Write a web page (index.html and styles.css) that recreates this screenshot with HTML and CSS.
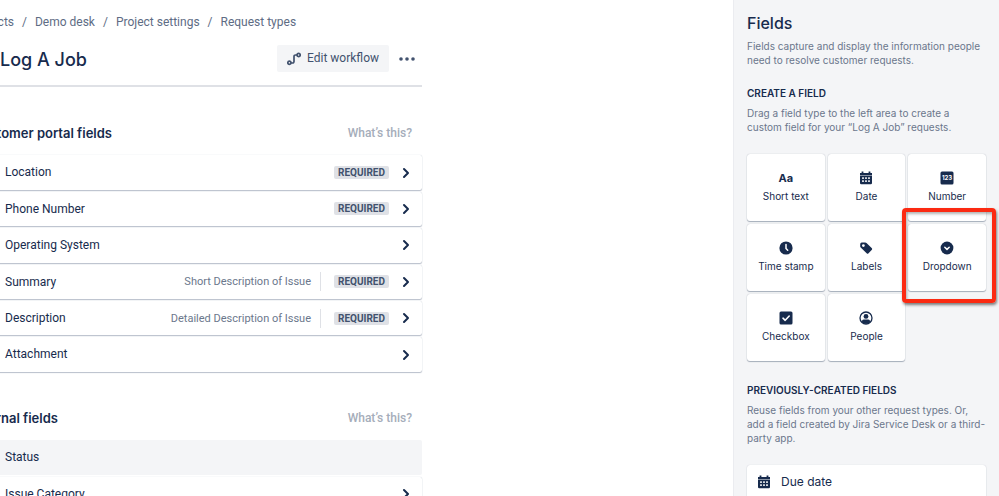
FILE: index.html
```
<!DOCTYPE html>
<html lang="en">
<head>
    <meta charset="UTF-8">
    <meta name="viewport" content="width=device-width, initial-scale=1.0">
    <title>Log A Job - Request types</title>
    <link rel="stylesheet" href="styles.css">
</head>
<body>
    <!-- Shared icons -->
    <svg class="sprite" aria-hidden="true">
        <symbol id="chevron" viewBox="0 0 10 12">
            <path d="M3 2l4 4-4 4" fill="none" stroke="currentColor" stroke-width="2" stroke-linecap="round" stroke-linejoin="round"/>
        </symbol>
        <symbol id="calendar" viewBox="0 0 14 14">
            <path d="M1 2h1.6V.6h1.8V2h5.2V.6h1.8V2H13v2H1z" fill="currentColor"/>
            <path d="M1 4.6h12V12a1.2 1.2 0 0 1-1.2 1.2H2.2A1.2 1.2 0 0 1 1 12z" fill="currentColor"/>
            <path d="M3.2 6.3h1.6v1.6H3.2zM6.2 6.3h1.6v1.6H6.2zM9.2 6.3h1.6v1.6H9.2zM3.2 9.3h1.6v1.6H3.2zM6.2 9.3h1.6v1.6H6.2zM9.2 9.3h1.6v1.6H9.2z" fill="#fff"/>
        </symbol>
    </svg>

    <div class="page">
        <main class="content">
            <nav class="breadcrumbs" aria-label="Breadcrumbs">
                <a href="#">Projects</a><span>/</span>
                <a href="#">Demo desk</a><span>/</span>
                <a href="#">Project settings</a><span>/</span>
                <a href="#">Request types</a>
            </nav>

            <header class="title-bar">
                <h1>Log A Job</h1>
                <button class="edit-button" type="button">
                    <svg width="14" height="14" viewBox="0 0 14 14" fill="none" stroke="currentColor" stroke-width="1.7">
                        <circle cx="2.4" cy="10.8" r="1.6"/>
                        <circle cx="11.6" cy="3" r="1.6"/>
                        <path d="M4 11h1.6A1.4 1.4 0 0 0 7 9.6V4.4A1.4 1.4 0 0 1 8.4 3H10"/>
                    </svg>
                    Edit workflow
                </button>
                <button class="more-button" type="button" aria-label="More actions">
                    <svg width="16" height="4" viewBox="0 0 16 4" fill="currentColor">
                        <circle cx="2" cy="2" r="1.8"/><circle cx="8" cy="2" r="1.8"/><circle cx="14" cy="2" r="1.8"/>
                    </svg>
                </button>
            </header>

            <section class="group">
                <div class="group-header">
                    <h2>Customer portal fields</h2>
                    <a href="#">What’s this?</a>
                </div>
                <ul class="rows">
                    <li class="row">
                        <span class="row-name">Location</span>
                        <span class="lozenge">REQUIRED</span>
                        <svg class="chevron"><use href="#chevron"/></svg>
                    </li>
                    <li class="row">
                        <span class="row-name">Phone Number</span>
                        <span class="lozenge">REQUIRED</span>
                        <svg class="chevron"><use href="#chevron"/></svg>
                    </li>
                    <li class="row">
                        <span class="row-name">Operating System</span>
                        <svg class="chevron"><use href="#chevron"/></svg>
                    </li>
                    <li class="row">
                        <span class="row-name">Summary</span>
                        <span class="row-note">Short Description of Issue</span>
                        <span class="lozenge">REQUIRED</span>
                        <svg class="chevron"><use href="#chevron"/></svg>
                    </li>
                    <li class="row">
                        <span class="row-name">Description</span>
                        <span class="row-note">Detailed Description of Issue</span>
                        <span class="lozenge">REQUIRED</span>
                        <svg class="chevron"><use href="#chevron"/></svg>
                    </li>
                    <li class="row">
                        <span class="row-name">Attachment</span>
                        <svg class="chevron"><use href="#chevron"/></svg>
                    </li>
                </ul>
            </section>

            <section class="group">
                <div class="group-header">
                    <h2>Internal fields</h2>
                    <a href="#">What’s this?</a>
                </div>
                <ul class="rows">
                    <li class="row row-locked">
                        <span class="row-name">Status</span>
                    </li>
                    <li class="row">
                        <span class="row-name">Issue Category</span>
                        <svg class="chevron"><use href="#chevron"/></svg>
                    </li>
                </ul>
            </section>
        </main>

        <aside class="sidebar">
            <h2>Fields</h2>
            <p>Fields capture and display the information people need to resolve customer requests.</p>

            <h3>CREATE A FIELD</h3>
            <p>Drag a field type to the left area to create a custom field for your “Log A Job” requests.</p>

            <div class="tiles">
                <button class="tile" type="button">
                    <span class="tile-letters" aria-hidden="true">Aa</span>
                    Short text
                </button>
                <button class="tile" type="button">
                    <svg class="icon"><use href="#calendar"/></svg>
                    Date
                </button>
                <button class="tile" type="button">
                    <svg class="icon" viewBox="0 0 14 14">
                        <rect x="0.5" y="0.5" width="13" height="13" rx="1.5" fill="currentColor"/>
                        <text class="icon-digits" x="7" y="9.2" text-anchor="middle">123</text>
                    </svg>
                    Number
                </button>
                <button class="tile" type="button">
                    <svg class="icon" viewBox="0 0 14 14">
                        <circle cx="7" cy="7" r="6.6" fill="currentColor"/>
                        <path d="M7 3.5V7.4l1.7 1.9" fill="none" stroke="#fff" stroke-width="1.5" stroke-linecap="round"/>
                    </svg>
                    Time stamp
                </button>
                <button class="tile" type="button">
                    <svg class="icon" viewBox="0 0 14 14">
                        <path fill="currentColor" fill-rule="evenodd" d="M1.2 3.2Q1.2 1.7 2.7 1.5L6.2 1.4Q7 1.4 7.5 1.9L12.9 7.3Q13.5 8 12.9 8.7L9.3 12.4Q8.6 13 7.9 12.4L1.7 6.6Q1.2 6.1 1.2 5.5zM4.4 3.2a1.4 1.4 0 1 0 0 2.8 1.4 1.4 0 0 0 0-2.8z"/>
                    </svg>
                    Labels
                </button>
                <button class="tile highlighted" type="button">
                    <svg class="icon" viewBox="0 0 14 14">
                        <circle cx="7" cy="7" r="6.4" fill="currentColor"/>
                        <path d="M4.8 6.2L7 8.4l2.2-2.2" fill="none" stroke="#fff" stroke-width="1.5" stroke-linecap="round" stroke-linejoin="round"/>
                    </svg>
                    Dropdown
                </button>
                <button class="tile" type="button">
                    <svg class="icon" viewBox="0 0 14 14">
                        <rect x="0.5" y="0.5" width="13" height="13" rx="1.5" fill="currentColor"/>
                        <path d="M4 7.2l2.2 2.1L10.2 5" fill="none" stroke="#fff" stroke-width="1.6" stroke-linecap="round" stroke-linejoin="round"/>
                    </svg>
                    Checkbox
                </button>
                <button class="tile" type="button">
                    <svg class="icon" viewBox="0 0 14 14">
                        <circle cx="7" cy="7" r="6" fill="none" stroke="currentColor" stroke-width="1.3"/>
                        <circle cx="7" cy="5.4" r="2.4" fill="currentColor"/>
                        <path d="M3 11.2V10.2Q3 8.6 4.6 8.6H9.4Q11 8.6 11 10.2V11.2Q9.4 12.8 7 12.8T3 11.2z" fill="currentColor"/>
                    </svg>
                    People
                </button>
            </div>

            <h3>PREVIOUSLY-CREATED FIELDS</h3>
            <p>Reuse fields from your other request types. Or, add a field created by Jira Service Desk or a third-party app.</p>

            <button class="saved-field" type="button">
                <svg class="icon"><use href="#calendar"/></svg>
                Due date
            </button>
        </aside>
    </div>
</body>
</html>
```
FILE: styles.css
```
* {
    box-sizing: border-box;
    margin: 0;
    padding: 0;
}

body {
    background: #fff;
    color: #172b4d;
    font-family: Inter, Roboto, "Liberation Sans", sans-serif;
    font-size: 12px;
    line-height: 1.2;
}

a {
    color: inherit;
    text-decoration: none;
}

button {
    border: none;
    color: inherit;
    font: inherit;
    cursor: pointer;
}

.sprite {
    display: none;
}

.page {
    display: flex;
    justify-content: space-between;
    height: 100vh;
    overflow: hidden;
}

/* Left column, its gutter runs under the window edge */
.content {
    flex: 0 1 452px;
    margin-left: -30px;
    padding-top: 15px;
    font-family: Roboto, "Liberation Sans", sans-serif;
}

.breadcrumbs {
    display: flex;
    gap: 8px;
    color: #5e6c84;
    white-space: nowrap;
}

.title-bar {
    display: flex;
    align-items: center;
    margin-top: 16px;
    padding: 0 7px 13px 30px;
    border-bottom: 2px solid #dfe1e6;
}

.title-bar h1 {
    margin-right: auto;
    padding-top: 2px;
    font-family: Inter, sans-serif;
    font-size: 18px;
    font-weight: 500;
}

.edit-button {
    display: flex;
    align-items: center;
    gap: 6px;
    padding: 6px 10px;
    border-radius: 2px;
    background: #f4f5f7;
    color: #42526e;
}

.more-button {
    display: flex;
    margin-left: 10px;
    background: none;
    color: #42526e;
}

.group-header {
    display: flex;
    justify-content: space-between;
    align-items: center;
    padding: 39px 10px 14px 2px;
}

.group-header h2 {
    font-family: Inter, sans-serif;
    font-size: 13px;
    font-weight: 600;
}

.group-header a {
    color: #a5adba;
    font-weight: 500;
}

.rows {
    display: flex;
    flex-direction: column;
    gap: 2px;
    list-style: none;
}

.row {
    display: flex;
    align-items: center;
    padding: 10px 11px 10px 35px;
    border-radius: 2px;
    box-shadow: 0 1px 1px #b9bfcb, 0 0 1px #c1c7d0;
}

.row-locked {
    background: #f4f5f7;
    box-shadow: none;
}

.row-name {
    margin-right: auto;
}

.row-note {
    margin: -3px 13px -3px 0;
    padding: 3px 9px 3px 0;
    border-right: 1px solid #dfe1e6;
    color: #6b778c;
    font-size: 11px;
}

.lozenge {
    padding: 0 4px;
    border-radius: 2px;
    background: #dfe1e6;
    color: #42526e;
    font-size: 10px;
    font-weight: 700;
    line-height: 13px;
}

.chevron {
    width: 10px;
    height: 12px;
    margin-left: 12px;
}

/* Right column */
.sidebar {
    flex: 0 0 266px;
    padding: 15px 13px 0 13px;
    border-left: 1px solid #ebecf0;
    background: #f4f5f7;
}

.sidebar h2 {
    font-size: 16px;
    font-weight: 500;
    line-height: 17px;
}

.sidebar h3 {
    margin-top: 20px;
    font-size: 10px;
    font-weight: 600;
}

.sidebar p {
    margin-top: 7px;
    color: #6b778c;
    font-size: 10px;
    line-height: 14px;
}

.tiles {
    display: grid;
    grid-template-columns: repeat(3, 1fr);
    gap: 3px;
    margin: 20px 0 23px;
}

.tile {
    position: relative;
    display: flex;
    flex-direction: column;
    align-items: center;
    gap: 5px;
    padding: 17px 0 18px;
    border-radius: 3px;
    background: #fff;
    box-shadow: 0 1px 1px #a5adba, 0 0 1px #a5adba;
    font-size: 10px;
    line-height: 13px;
}

.icon {
    width: 14px;
    height: 14px;
}

.icon-digits {
    fill: #fff;
    font-size: 6px;
    font-weight: 700;
}

.tile-letters {
    font-size: 11px;
    font-weight: 700;
    line-height: 14px;
}

/* Red callout frame around a tile */
.highlighted::after {
    content: "";
    position: absolute;
    z-index: 1;
    inset: -16px -10px -12px -6px;
    border: 4px solid #fb2a12;
    border-radius: 4px;
    box-shadow: 1px 2px 3px rgba(0, 0, 0, 0.5), inset 1px 2px 3px rgba(0, 0, 0, 0.3);
}

.saved-field {
    display: flex;
    align-items: center;
    gap: 10px;
    width: 100%;
    margin-top: 20px;
    padding: 10px;
    border-radius: 3px;
    background: #fff;
    box-shadow: 0 1px 1px #a5adba, 0 0 1px #c1c7d0;
}
```
